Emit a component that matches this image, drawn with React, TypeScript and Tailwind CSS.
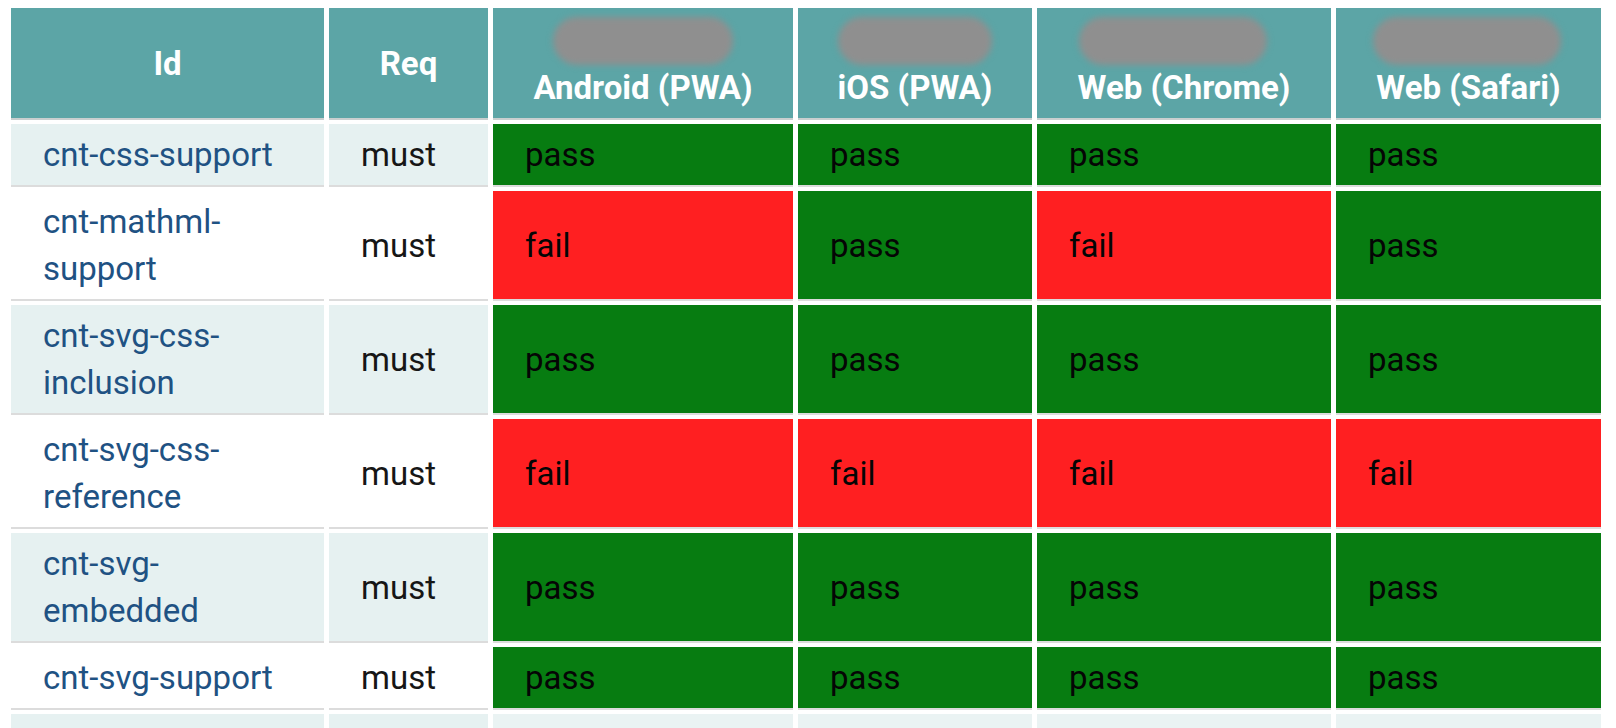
import React from "react";

type Res = "pass" | "fail";

const rows: { id: React.ReactNode; res: Res[]; shade: boolean }[] = [
  { id: "cnt-css-support", res: ["pass", "pass", "pass", "pass"], shade: true },
  { id: <>cnt-mathml-<br />support</>, res: ["fail", "pass", "fail", "pass"], shade: false },
  { id: <>cnt-svg-css-<br />inclusion</>, res: ["pass", "pass", "pass", "pass"], shade: true },
  { id: <>cnt-svg-css-<br />reference</>, res: ["fail", "fail", "fail", "fail"], shade: false },
  { id: <>cnt-svg-<br />embedded</>, res: ["pass", "pass", "pass", "pass"], shade: true },
  { id: "cnt-svg-support", res: ["pass", "pass", "pass", "pass"], shade: false },
];

const browsers = [
  { name: "Android (PWA)", pill: "w-[180px]", shift: "" },
  { name: "iOS (PWA)", pill: "w-[154px]", shift: "" },
  { name: "Web (Chrome)", pill: "w-[188px]", shift: "mr-[22px]" },
  { name: "Web (Safari)", pill: "w-[188px]", shift: "mr-[4px]" },
];

export default function App() {
  return (
    <div
      className="h-[728px] w-[1616px] overflow-hidden bg-white pl-[11px] pt-[8px]"
      style={{ fontFamily: "Roboto, 'Liberation Sans', Arial, sans-serif" }}
    >
      <div className="grid grid-cols-[313px_159px_300px_234px_294px_265px] gap-x-[5px] gap-y-[4px] text-[33px] leading-[47px]">
        {/* Header */}
        <div className="flex h-[112px] items-center justify-center border-b-2 border-[#c9cfcf] bg-[#5ca5a6] font-bold text-white">
          Id
        </div>
        <div className="flex h-[112px] items-center justify-center border-b-2 border-[#c9cfcf] bg-[#5ca5a6] font-bold text-white">
          Req
        </div>
        {browsers.map((b) => (
          <div
            key={b.name}
            className="flex h-[112px] flex-col items-center border-b-2 border-[#c9cfcf] bg-[#5ca5a6] pt-[9px] font-bold text-white"
          >
            <div className={`h-[48px] rounded-full bg-[#8f8f8f] blur-[3px] ${b.pill} ${b.shift}`} />
            <div className="-mt-[1px]">{b.name}</div>
          </div>
        ))}

        {/* Body */}
        {rows.map((r, i) => (
          <React.Fragment key={i}>
            <div
              className={`flex items-center border-b-2 border-[#dcdcdc] py-[7px] pl-[32px] pr-[20px] text-[#1f5283] ${
                r.shade ? "bg-[#e6f1f1]" : "bg-white"
              }`}
            >
              <span>{r.id}</span>
            </div>
            <div
              className={`flex items-center border-b-2 border-[#dcdcdc] py-[7px] pl-[32px] text-[#161616] ${
                r.shade ? "bg-[#e6f1f1]" : "bg-white"
              }`}
            >
              must
            </div>
            {r.res.map((v, j) => (
              <div
                key={j}
                className={`flex items-center border-b-2 border-[#dcdcdc] py-[7px] pl-[32px] text-[#050505] ${
                  v === "pass" ? "bg-[#077c11]" : "bg-[#ff1f21]"
                }`}
              >
                {v}
              </div>
            ))}
          </React.Fragment>
        ))}

        {/* Next row (partially visible) */}
        <div className="h-[60px] bg-[#e6f1f1]" />
        <div className="h-[60px] bg-[#e6f1f1]" />
        <div className="h-[60px] bg-[#eaf3f3]" />
        <div className="h-[60px] bg-[#eaf3f3]" />
        <div className="h-[60px] bg-[#eaf3f3]" />
        <div className="h-[60px] bg-[#eaf3f3]" />
      </div>
    </div>
  );
}
